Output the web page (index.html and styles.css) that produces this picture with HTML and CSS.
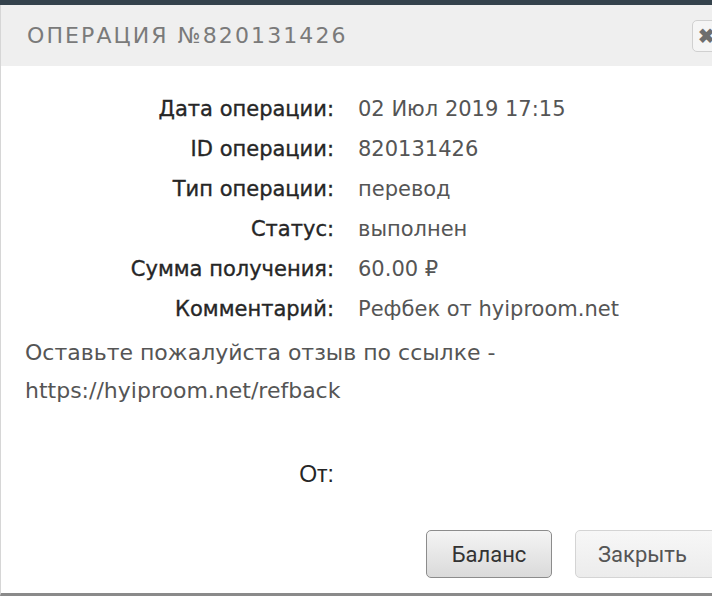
FILE: index.html
```html
<!DOCTYPE html>
<html lang="ru">
<head>
    <meta charset="UTF-8">
    <meta name="viewport" content="width=device-width, initial-scale=1.0">
    <title>Операция №820131426</title>
    <link rel="stylesheet" href="styles.css">
</head>
<body>
    <div class="topbar"></div>

    <div class="dialog">
        <div class="dialog-header">
            <span class="dialog-title">Операция №820131426</span>
            <button class="close-btn" type="button">&#10006;</button>
        </div>

        <div class="dialog-body">
            <div class="info-grid">
                <span class="label">Дата операции:</span><span class="value">02 Июл 2019 17:15</span>
                <span class="label">ID операции:</span><span class="value">820131426</span>
                <span class="label">Тип операции:</span><span class="value">перевод</span>
                <span class="label">Статус:</span><span class="value">выполнен</span>
                <span class="label">Сумма получения:</span><span class="value">60.00 &#8381;</span>
                <span class="label">Комментарий:</span><span class="value">Рефбек от hyiproom.net</span>
            </div>

            <p class="comment">Оставьте пожалуйста отзыв по ссылке -<br>https://hyiproom.net/refback</p>

            <div class="info-grid from-row">
                <span class="label label-plain">От:</span><span class="value"></span>
            </div>
        </div>

        <div class="dialog-footer">
            <button class="btn btn-main" type="button">Баланс</button>
            <button class="btn btn-light" type="button">Закрыть</button>
        </div>
    </div>
</body>
</html>
```

FILE: styles.css
```css
body {
    margin: 0;
    background-color: #34424c;
    font-family: "DejaVu Sans", Arial, sans-serif;
    overflow: hidden;
}
.topbar {
    height: 5px;
    background-color: #34424c;
}
.dialog {
    background-color: #fff;
    border-left: 1px solid #d6d6d6;
    height: 588px;
    border-bottom: 3px solid #8a8a8a;
}
.dialog-header {
    height: 61px;
    background-color: #efefef;
    display: flex;
    align-items: center;
    justify-content: space-between;
    padding-left: 26px;
}
.dialog-title {
    font-family: "DejaVu Sans", sans-serif;
    font-size: 22px;
    letter-spacing: 2.1px;
    text-transform: uppercase;
    color: #7a7a7a;
}
.close-btn {
    width: 40px;
    height: 32px;
    margin-right: -20px;
    border: 1px solid #d0d0d0;
    border-radius: 5px;
    background-color: #f5f5f5;
    color: #6e6e6e;
    font-size: 20px;
    font-weight: bold;
    text-align: left;
    padding: 0 0 0 5px;
}
.dialog-body {
    padding: 23px 0 0 24px;
}
.info-grid {
    display: grid;
    grid-template-columns: 309px auto;
    column-gap: 24px;
    line-height: 40px;
    font-size: 21px;
}
.label {
    text-align: right;
    color: #262626;
    -webkit-text-stroke: 0.35px #262626;
}
.value {
    color: #555;
}
.comment {
    margin: 5px 0 0;
    font-size: 22px;
    line-height: 38px;
    color: #555;
}
.from-row {
    margin-top: 44px;
}
.label-plain {
    font-family: "Liberation Sans", Arial, sans-serif;
    -webkit-text-stroke: 0;
    font-size: 23px;
}
.dialog-footer {
    display: flex;
    justify-content: flex-end;
    gap: 23px;
    margin-top: 36px;
    margin-right: -30px;
}
.btn {
    height: 48px;
    font-family: Roboto, Arial, sans-serif;
    font-size: 22px;
    border-radius: 5px;
    padding: 0 22px;
}
.btn-main {
    width: 126px;
    color: #333;
    border: 1px solid #8c8c8c;
    background: linear-gradient(#f4f4f4, #dadada);
}
.btn-light {
    width: 167px;
    color: #555;
    border: 1px solid #d4d4d4;
    background: linear-gradient(#f7f7f7, #ececec);
    text-align: left;
}
```
